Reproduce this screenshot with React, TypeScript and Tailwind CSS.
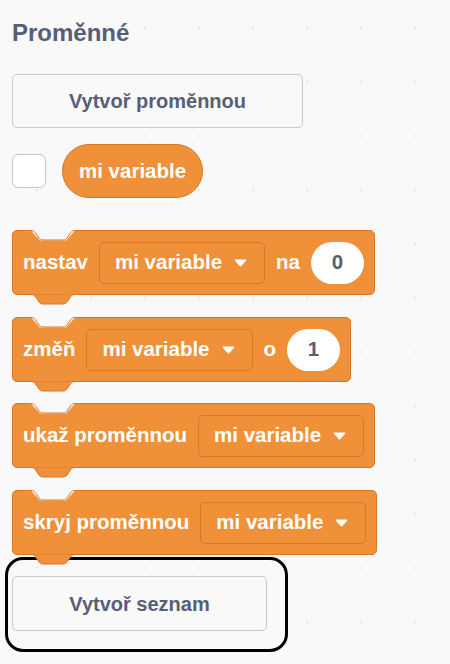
import React from "react";

const Arrow = () => (
  <svg width="13" height="8" viewBox="0 0 13 8" className="shrink-0">
    <path
      d="M1.5 1.2 H11.5 L6.5 6.6 Z"
      fill="#ffffff"
      stroke="#ffffff"
      strokeWidth="1.6"
      strokeLinejoin="round"
    />
  </svg>
);

const Dropdown = () => (
  <div className="flex items-center h-[42px] pl-[15px] pr-[17px] gap-[12px] rounded-[5px] border border-[#d6762a]">
    <span>mi variable</span>
    <Arrow />
  </div>
);

const Oval = ({ value }: { value: string }) => (
  <div className="flex items-center justify-center w-[53px] h-[42px] rounded-full bg-white text-[#575e75]">
    {value}
  </div>
);

const Block = ({
  children,
  className,
}: {
  children: React.ReactNode;
  className?: string;
}) => (
  <div
    className={`relative self-start flex items-center h-[65px] pl-[10px] pr-[10px] gap-[11px] rounded-[5px] border border-[#d6762a] bg-[#f0913a] text-white font-bold text-[20.5px] ${className ?? ""}`}
  >
    {/* top notch */}
    <svg
      width="44"
      height="12"
      viewBox="0 0 44 12"
      className="absolute left-[18px] top-[-1px] overflow-visible"
    >
      <path d="M-0.5 0 H44.5 L35 10.5 H9 Z" fill="#f9f9f9" />
      <path
        d="M0 0.5 C2 0.5 3 1 4 2.2 L8 8 C9 9.3 10 10 12 10 H32 C34 10 35 9.3 36 8 L40 2.2 C41 1 42 0.5 44 0.5"
        fill="none"
        stroke="#d6762a"
        strokeWidth="1"
      />
    </svg>
    {/* bottom tab */}
    <svg
      width="44"
      height="12"
      viewBox="0 0 44 12"
      className="absolute left-[18px] top-full z-10 overflow-visible"
    >
      <path
        d="M0 0.5 C2 0.5 3 1 4 2.2 L8 8 C9 9.3 10 10 12 10 H32 C34 10 35 9.3 36 8 L40 2.2 C41 1 42 0.5 44 0.5 Z"
        fill="#f0913a"
      />
      <path
        d="M0 0.5 C2 0.5 3 1 4 2.2 L8 8 C9 9.3 10 10 12 10 H32 C34 10 35 9.3 36 8 L40 2.2 C41 1 42 0.5 44 0.5"
        fill="none"
        stroke="#d6762a"
        strokeWidth="1"
      />
    </svg>
    {children}
  </div>
);

export default function App() {
  return (
    <div className="w-full h-[664px] overflow-hidden bg-[#f9f9f9] bg-[radial-gradient(circle,#e6e6e6_1px,transparent_1.6px)] bg-[size:54px_54px] bg-[position:10px_1px] px-3 font-['Liberation_Sans',Arial,sans-serif]">
      <div className="flex flex-col">
        <h2 className="mt-[21px] h-[24px] leading-[24px] text-[24px] font-bold text-[#575e75]">
          Proměnné
        </h2>

        <button className="mt-[29px] w-[291px] h-[54px] rounded-[5px] border border-[#c9c9c9] bg-[#f9f9f9] text-[20px] font-bold text-[#575e75]">
          Vytvoř proměnnou
        </button>

        <div className="mt-[16px] flex items-center gap-[16px]">
          <div className="w-[34px] h-[34px] rounded-[6px] border border-[#c6c6c6] bg-white" />
          <div className="flex items-center h-[54px] px-[16px] rounded-full border border-[#d6762a] bg-[#f0913a] text-white font-bold text-[20.5px]">
            mi variable
          </div>
        </div>

        <Block className="mt-[32px]">
          <span>nastav</span>
          <Dropdown />
          <span>na</span>
          <Oval value="0" />
        </Block>

        <Block className="mt-[22px]">
          <span>změň</span>
          <Dropdown />
          <span>o</span>
          <Oval value="1" />
        </Block>

        <Block className="mt-[21px]">
          <span>ukaž proměnnou</span>
          <Dropdown />
        </Block>

        <Block className="mt-[22px]">
          <span>skryj proměnnou</span>
          <Dropdown />
        </Block>

        <div className="mt-[2px] -ml-[7px] self-start w-[283px] h-[95px] rounded-[18px] border-[3px] border-black pl-[4px] pt-[16px]">
          <button className="w-[255px] h-[55px] rounded-[5px] border border-[#c9c9c9] bg-[#f9f9f9] text-[20px] font-bold text-[#575e75]">
            Vytvoř seznam
          </button>
        </div>
      </div>
    </div>
  );
}
